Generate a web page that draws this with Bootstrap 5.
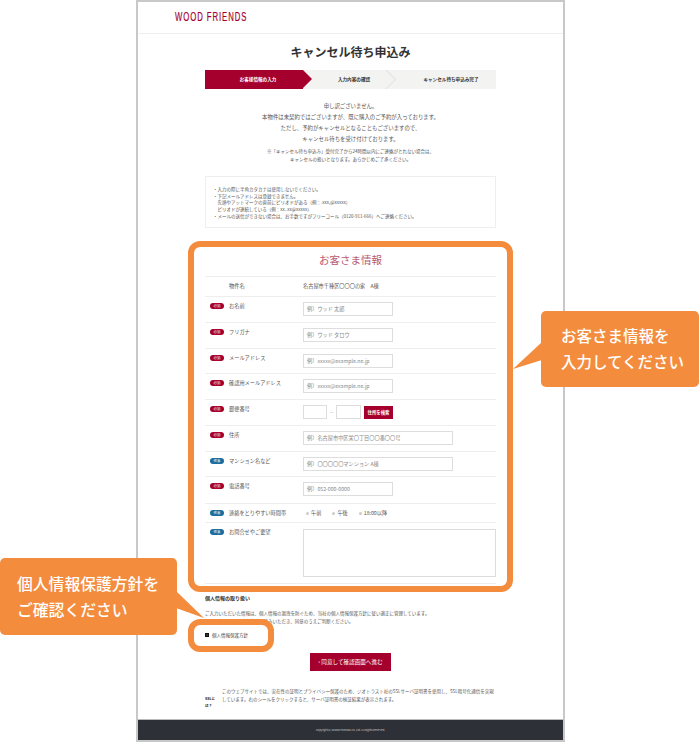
<!DOCTYPE html>
<html lang="ja"><head><meta charset="utf-8">
<link href="https://cdn.jsdelivr.net/npm/bootstrap@5.3.0/dist/css/bootstrap.min.css" rel="stylesheet">
<style>
html,body{margin:0;background:#fff;font-family:"Noto Sans CJK JP","Noto Sans",sans-serif;color:#444}
body{height:742px;overflow:hidden;position:relative}
.sheet{width:429px;height:742px;margin-left:136px;border:2px solid #c8c8c8;background:#fff;display:flex;flex-direction:column}
.brandbar{height:32px;border-bottom:1px solid #eee;padding-left:37px;display:flex;align-items:center;flex:none}
.brandname{font-family:"Liberation Sans",sans-serif;font-size:12.5px;letter-spacing:1.5px;color:#a5002d;transform:scaleX(.62);transform-origin:left center;white-space:nowrap;font-weight:400;-webkit-text-stroke:.2px #a5002d}
.ptitle{font-size:12px;font-weight:700;color:#333;text-align:center;line-height:18px;margin:9px 0 9px;letter-spacing:0}
.inner{margin:0 0 0 67px;width:291px}
.stepper{height:19px;display:flex;background:#f3f3f1;font-size:4.6px;font-weight:700;color:#333}
.stepitem{position:relative;display:flex;align-items:center;justify-content:center}
.s1{width:98px;background:#a5002d;color:#fff;padding-left:8px}
.s1::after{content:"";position:absolute;left:98px;top:0;border-left:9px solid #a5002d;border-top:9.5px solid transparent;border-bottom:9.5px solid transparent}
.s2{width:95px;padding-left:7px}
.s2::after{content:"";position:absolute;right:-6px;top:0;width:19px;height:19px;clip-path:polygon(0 0,10% 0,60% 50%,10% 100%,0 100%,50% 50%);background:#e6e6e3}
.s3{flex:1;padding-left:8px}
.leadtxt{text-align:center;font-size:5.4px;line-height:11px;margin-top:12px;color:#555}
.subtxt{text-align:center;font-size:4.5px;line-height:8px;margin-top:2px;color:#555}
.notebox{border:1px solid #eee;height:52px;margin-top:13px;padding:9px 7px;font-size:4.5px;line-height:6.7px;color:#555}
.formtitle{font-size:10.5px;color:#b85a75;text-align:center;line-height:16px;margin-top:21px;height:27px;padding-top:3px}
.frow{display:flex;border-top:1px solid #eee;font-size:5.2px;color:#555;padding-left:5px}
.h20{height:20px}.h26{height:26px}.h25{height:25px}.h27{height:27px}.h19{height:19px}.h61{height:61px}.endline{height:1px}
.tagwrap{width:14px;flex:none;margin-top:6px}
.tagpill{display:block;width:14px;height:6px;border-radius:3px;background:#a5002d;color:#fff;font-size:3.4px;line-height:6px;text-align:center}
.tagpill.opt{background:#1a6d9c}
.flabel{width:79px;flex:none;padding-left:5px;line-height:8px;margin-top:5px}
.ffield{flex:1;display:flex;align-items:flex-start;margin-top:5px;gap:3px}
.ffield.tall{margin-top:6px}
.finput{height:14px;border:1px solid #ddd;padding:0 3px;font-size:5.2px;line-height:12px;color:#888;background:#fff;white-space:nowrap}
.w90{width:90px}.w150{width:150px}.w24{width:24px}.w25{width:25px}
.dashmark{color:#aaa;line-height:14px;width:3px;text-align:center}
.zipbtn{width:29px;height:13px;margin-top:1px;background:#a5002d;color:#fff;font-size:4.4px;font-weight:700;line-height:13px;text-align:center}
.radioopt{display:flex;align-items:center;gap:2px;margin-right:5px;line-height:8px;color:#555}
.radiodot{width:3px;height:3px;border-radius:50%;background:#ccc;margin-left:3px}
.fta{width:193px;height:48px;border:1px solid #ddd;background:#fff}
.pvhead{font-size:5px;font-weight:700;color:#333;line-height:8px;margin-top:10px}
.pvtxt{font-size:4.5px;line-height:8px;color:#555;margin-top:7px;white-space:nowrap}
.pvcheck{display:flex;align-items:center;gap:3px;font-size:4.5px;line-height:8px;color:#444;margin-top:6px}
.pvbox{width:4px;height:4px;background:#333;border:1px solid #111}
.agreebtn{width:81px;height:18px;background:#a5002d;color:#fff;font-size:5.6px;line-height:18px;text-align:center;margin:14px auto 0}
.sslrow{display:flex;margin-top:17px;align-items:center}
.sslicon{width:17px;flex:none;font-size:3.6px;line-height:7px;color:#222;margin-top:7px;font-weight:700}
.ssltxt{font-size:4.5px;line-height:8px;color:#555;margin-top:-7px}
.pagefoot{margin-top:auto;height:21px;border-top:1px solid #bbb;background:#2d3036;color:#ccc;font-size:2.6px;line-height:20px;text-align:center;flex:none}
.hl{position:absolute;border:6px solid #f48c3e;border-radius:12px;pointer-events:none}
.hl1{left:188px;top:241px;width:325px;height:351px}
.hl2{left:188px;top:619px;width:86px;height:33px}
.bubble{position:absolute;background:#f48c3e;color:#fff;border-radius:5px;font-weight:500}
.b1{left:541px;top:311px;width:158px;height:76px;font-size:15.5px;line-height:26px;padding:11px 0 0 20px}
.b2{left:0;top:558px;width:177px;height:77px;font-size:15.8px;line-height:26px;padding:13px 0 0 17px}
.tail{position:absolute;display:block}
.t1{left:512px;top:342px}
.t2{left:176px;top:590px}
</style></head><body>
<div class="sheet">
  <header class="brandbar"><span class="brandname">WOOD FRIENDS</span></header>
  <h1 class="ptitle">キャンセル待ち申込み</h1>
  <main class="inner">
    <div class="stepper">
      <div class="stepitem s1">お客様情報の入力</div>
      <div class="stepitem s2">入力内容の確認</div>
      <div class="stepitem s3">キャンセル待ち申込み完了</div>
    </div>
    <div class="leadtxt">申し訳ございません。<br>本物件は未契約ではございますが、既に購入のご予約が入っております。<br>ただし、予約がキャンセルとなることもございますので、<br>キャンセル待ちを受け付けております。</div>
    <div class="subtxt">※「キャンセル待ち申込み」受付完了から24時間以内にご連絡がとれない場合は、<br>キャンセルの扱いとなります。あらかじめご了承ください。</div>
    <div class="notebox">・入力の際に半角カタカナは使用しないでください。<br>・下記メールアドレスは登録できません。<br>　先頭やアットマークの直前にピリオドがある（例：.xxx,@xxxxx）<br>　ピリオドが連続している（例：xx..xx@xxxxx）<br>・メールの送信ができない場合は、お手数ですがフリーコール（0120-911-666）へご連絡ください。</div>
    <div class="formtitle">お客さま情報</div>
    <div class="frow h20"><span class="tagwrap"></span><span class="flabel">物件名</span><div class="ffield"><span>名古屋市千種区〇〇〇の家　A棟</span></div></div>
    <div class="frow h26"><span class="tagwrap"><span class="tagpill">必須</span></span><span class="flabel">お名前</span><div class="ffield"><div class="finput w90">例）ウッド 太郎</div></div></div>
    <div class="frow h26"><span class="tagwrap"><span class="tagpill">必須</span></span><span class="flabel">フリガナ</span><div class="ffield"><div class="finput w90">例）ウッド タロウ</div></div></div>
    <div class="frow h25"><span class="tagwrap"><span class="tagpill">必須</span></span><span class="flabel">メールアドレス</span><div class="ffield"><div class="finput w90">例）xxxxx@example.ne.jp</div></div></div>
    <div class="frow h26"><span class="tagwrap"><span class="tagpill">必須</span></span><span class="flabel">確認用メールアドレス</span><div class="ffield"><div class="finput w90">例）xxxxx@example.ne.jp</div></div></div>
    <div class="frow h26"><span class="tagwrap"><span class="tagpill">必須</span></span><span class="flabel">郵便番号</span><div class="ffield"><div class="finput w24"></div><span class="dashmark">−</span><div class="finput w25"></div><div class="zipbtn">住所を検索</div></div></div>
    <div class="frow h26"><span class="tagwrap"><span class="tagpill">必須</span></span><span class="flabel">住所</span><div class="ffield"><div class="finput w150">例）名古屋市中区栄〇丁目〇〇番〇〇号</div></div></div>
    <div class="frow h25"><span class="tagwrap"><span class="tagpill opt">任意</span></span><span class="flabel">マンション名など</span><div class="ffield"><div class="finput w150">例）〇〇〇〇〇マンション A棟</div></div></div>
    <div class="frow h27"><span class="tagwrap"><span class="tagpill">必須</span></span><span class="flabel">電話番号</span><div class="ffield"><div class="finput w90">例）052-000-0000</div></div></div>
    <div class="frow h19"><span class="tagwrap"><span class="tagpill opt">任意</span></span><span class="flabel">連絡をとりやすい時間帯</span><div class="ffield"><span class="radioopt"><i class="radiodot"></i>午前</span><span class="radioopt"><i class="radiodot"></i>午後</span><span class="radioopt"><i class="radiodot"></i>18:00以降</span></div></div>
    <div class="frow h61"><span class="tagwrap"><span class="tagpill opt">任意</span></span><span class="flabel">お問合せやご要望</span><div class="ffield tall"><div class="fta"></div></div></div>
    <div class="frow endline"></div>
    <div class="pvhead">個人情報の取り扱い</div>
    <div class="pvtxt">ご入力いただいた情報は、個人情報の漏洩を防ぐため、当社の個人情報保護方針に従い適正に管理しています。<br>下記の個人情報保護方針をお読みいただき、同意のうえご判断ください。</div>
    <div class="pvcheck"><i class="pvbox"></i>個人情報保護方針</div>
    <div class="agreebtn">› 同意して確認画面へ進む</div>
    <div class="sslrow"><div class="sslicon">SSLと<br>は？</div><div class="ssltxt">このウェブサイトでは、実在性の証明とプライバシー保護のため、ジオトラスト社のSSLサーバ証明書を使用し、SSL暗号化通信を実現しています。右のシールをクリックすると、サーバ証明書の検証結果が表示されます。</div></div>
  </main>
  <footer class="pagefoot">Copyright(C) WOOD FRIENDS Co.,Ltd. All Rights Reserved.</footer>
</div>
<div class="hl hl1"></div>
<div class="hl hl2"></div>
<svg class="tail t1" width="30" height="28" viewBox="0 0 30 28"><polygon points="30,0 1,27 30,18" fill="#f48c3e"/></svg>
<div class="bubble b1">お客さま情報を<br>入力してください</div>
<svg class="tail t2" width="30" height="30" viewBox="0 0 30 30"><polygon points="0,1 28,28 0,18" fill="#f48c3e"/></svg>
<div class="bubble b2">個人情報保護方針を<br>ご確認ください</div>
</body></html>
